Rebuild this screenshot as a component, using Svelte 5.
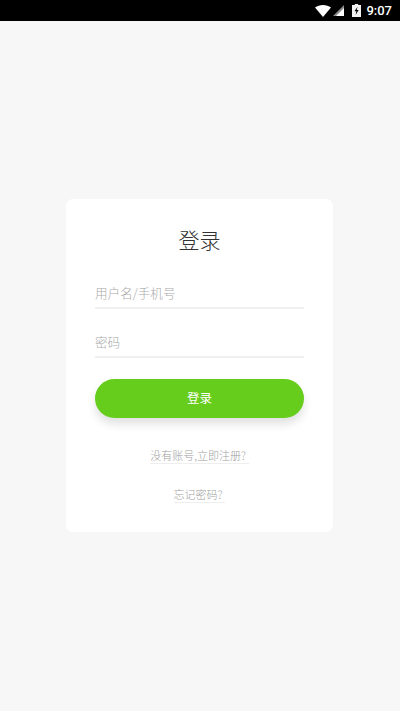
<script>
  let username = $state('');
  let password = $state('');
</script>

<div class="page">
  <header class="status">
    <svg class="wifi" width="16" height="12" viewBox="0 0 17 12" preserveAspectRatio="none"><path d="M0 2.6C2.3 .9 5.2 0 8.500 0s6.200 .9 8.500 2.600L8.500 12z" fill="#fff"/></svg>
    <svg class="signal" width="11" height="11" viewBox="0 0 11 11"><path d="M11 0v11H0z" fill="#8a8a8a"/><path d="M11 3V11H3z" fill="#fff"/></svg>
    <svg class="battery" width="9" height="13" viewBox="0 0 8 12" preserveAspectRatio="none"><path d="M2.500 0h3v1H8v11H0V1h2.500z" fill="#f2f2f2"/><path d="M4.900 2.500 2.200 6.800h1.700L3.200 10.200l2.700-4.700H4.200z" fill="#000"/></svg>
    <span class="time">9:07</span>
  </header>
  <main class="content">
    <form class="card" onsubmit={(e) => e.preventDefault()}>
      <h1>登录</h1>
      <input class="field" type="text" placeholder="用户名/手机号" bind:value={username} />
      <input class="field second" type="password" placeholder="密码" bind:value={password} />
      <button type="submit">登录</button>
      <a class="link register" href="#register">没有账号,立即注册?</a>
      <a class="link forgot" href="#forgot">忘记密码?</a>
    </form>
  </main>
</div>

<style>
  :global(body) {
    margin: 0;
    background: #f7f7f7;
    font-family: "Noto Sans CJK SC", "Liberation Sans", sans-serif;
  }
  .page {
    height: 711px;
    display: flex;
    flex-direction: column;
    overflow: hidden;
  }
  .status {
    height: 21px;
    flex: none;
    background: #000;
    display: flex;
    align-items: center;
    justify-content: flex-end;
    padding-right: 8px;
    color: #fff;
  }
  .wifi { margin-right: 2px; }
  .signal { margin-right: 8px; }
  .battery { margin-right: 5px; }
  .time {
    font-family: Roboto, sans-serif;
    font-size: 13px;
    font-weight: 500;
    line-height: 21px;
  }
  .content {
    flex: 1;
    display: flex;
    justify-content: center;
    align-items: flex-start;
    padding: 178px 1px 0 0;
  }
  .card {
    width: 267px;
    height: 333px;
    box-sizing: border-box;
    padding: 0 29px;
    background: #fff;
    border-radius: 7px;
    display: flex;
    flex-direction: column;
    align-items: center;
  }
  h1 {
    margin: 24px 0 0;
    font-size: 21px;
    font-weight: 300;
    line-height: 32px;
    color: #333;
  }
  .field {
    width: 100%;
    height: 34px;
    margin-top: 20px;
    padding: 2px 0 0;
    border: 0;
    border-bottom: 2px solid #f0f0f0;
    box-sizing: border-box;
    outline: none;
    font: 300 12.6px "Noto Sans CJK SC", sans-serif;
    color: #333;
    background: transparent;
  }
  .field::placeholder { color: #aaaaaa; }
  .second { margin-top: 15px; }
  button {
    width: 100%;
    height: 39px;
    margin-top: 21px;
    padding: 0 0 2px;
    border: 0;
    border-radius: 20px;
    background: #67cd1c;
    color: #fff;
    font: 400 12.5px "Noto Sans CJK SC", sans-serif;
    box-shadow: 0 6px 10px rgba(0, 0, 0, 0.12);
  }
  .link {
    font-size: 11px;
    font-weight: 300;
    color: #a0a0a0;
    text-decoration: none;
    border-bottom: 1px solid #eeeeee;
    line-height: 15px;
    padding-right: 3px;
  }
  .register { margin-top: 30px; }
  .forgot { margin-top: 23px; }
</style>
